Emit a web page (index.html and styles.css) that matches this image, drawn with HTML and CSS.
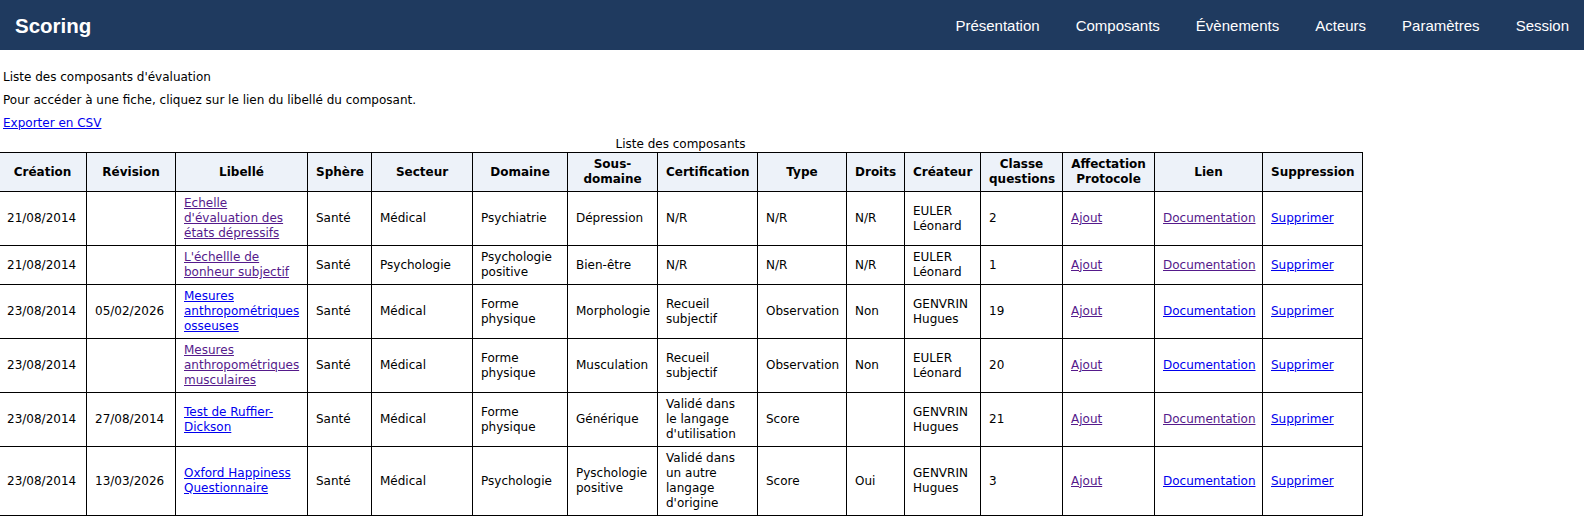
FILE: index.html
```html
<!DOCTYPE html>
<html lang="fr">
<head>
<meta charset="utf-8">
<title>Scoring - Composants</title>
<link rel="stylesheet" href="styles.css">
</head>
<body>
<header class="topbar">
  <span class="brand">Scoring</span>
  <nav class="menu">
    <a class="menu-link" href="#">Présentation</a>
    <a class="menu-link" href="#">Composants</a>
    <a class="menu-link" href="#">Évènements</a>
    <a class="menu-link" href="#">Acteurs</a>
    <a class="menu-link" href="#">Paramètres</a>
    <a class="menu-link" href="#">Session</a>
  </nav>
</header>
<main class="content">
  <p class="intro">Liste des composants d'évaluation</p>
  <p class="intro">Pour accéder à une fiche, cliquez sur le lien du libellé du composant.</p>
  <p class="intro intro-last"><a class="lnk" href="#">Exporter en CSV</a></p>
  <table class="grid">
    <caption class="grid-caption">Liste des composants</caption>
    <colgroup>
      <col class="c-creation">
      <col class="c-revision">
      <col class="c-libelle">
      <col class="c-sphere">
      <col class="c-secteur">
      <col class="c-domaine">
      <col class="c-sousdomaine">
      <col class="c-certif">
      <col class="c-type">
      <col class="c-droits">
      <col class="c-createur">
      <col class="c-classe">
      <col class="c-affect">
      <col class="c-lien">
      <col class="c-suppr">
    </colgroup>
    <thead>
      <tr>
        <th>Création</th>
        <th>Révision</th>
        <th>Libellé</th>
        <th>Sphère</th>
        <th>Secteur</th>
        <th>Domaine</th>
        <th>Sous-domaine</th>
        <th>Certification</th>
        <th>Type</th>
        <th>Droits</th>
        <th>Créateur</th>
        <th>Classe questions</th>
        <th>Affectation Protocole</th>
        <th>Lien</th>
        <th>Suppression</th>
      </tr>
    </thead>
    <tbody>
      <tr>
        <td>21/08/2014</td>
        <td></td>
        <td><a class="lnk seen" href="#">Echelle d'évaluation des états dépressifs</a></td>
        <td>Santé</td>
        <td>Médical</td>
        <td>Psychiatrie</td>
        <td>Dépression</td>
        <td>N/R</td>
        <td>N/R</td>
        <td>N/R</td>
        <td>EULER Léonard</td>
        <td>2</td>
        <td><a class="lnk seen" href="#">Ajout</a></td>
        <td><a class="lnk seen" href="#">Documentation</a></td>
        <td><a class="lnk" href="#">Supprimer</a></td>
      </tr>
      <tr>
        <td>21/08/2014</td>
        <td></td>
        <td><a class="lnk seen" href="#">L'échellle de bonheur subjectif</a></td>
        <td>Santé</td>
        <td>Psychologie</td>
        <td>Psychologie positive</td>
        <td>Bien-être</td>
        <td>N/R</td>
        <td>N/R</td>
        <td>N/R</td>
        <td>EULER Léonard</td>
        <td>1</td>
        <td><a class="lnk seen" href="#">Ajout</a></td>
        <td><a class="lnk seen" href="#">Documentation</a></td>
        <td><a class="lnk" href="#">Supprimer</a></td>
      </tr>
      <tr>
        <td>23/08/2014</td>
        <td>05/02/2026</td>
        <td><a class="lnk" href="#">Mesures anthropométriques osseuses</a></td>
        <td>Santé</td>
        <td>Médical</td>
        <td>Forme physique</td>
        <td>Morphologie</td>
        <td>Recueil subjectif</td>
        <td>Observation</td>
        <td>Non</td>
        <td>GENVRIN Hugues</td>
        <td>19</td>
        <td><a class="lnk seen" href="#">Ajout</a></td>
        <td><a class="lnk" href="#">Documentation</a></td>
        <td><a class="lnk" href="#">Supprimer</a></td>
      </tr>
      <tr>
        <td>23/08/2014</td>
        <td></td>
        <td><a class="lnk seen" href="#">Mesures anthropométriques musculaires</a></td>
        <td>Santé</td>
        <td>Médical</td>
        <td>Forme physique</td>
        <td>Musculation</td>
        <td>Recueil subjectif</td>
        <td>Observation</td>
        <td>Non</td>
        <td>EULER Léonard</td>
        <td>20</td>
        <td><a class="lnk seen" href="#">Ajout</a></td>
        <td><a class="lnk" href="#">Documentation</a></td>
        <td><a class="lnk" href="#">Supprimer</a></td>
      </tr>
      <tr>
        <td>23/08/2014</td>
        <td>27/08/2014</td>
        <td><a class="lnk" href="#">Test de Ruffier-Dickson</a></td>
        <td>Santé</td>
        <td>Médical</td>
        <td>Forme physique</td>
        <td>Générique</td>
        <td>Validé dans le langage d'utilisation</td>
        <td>Score</td>
        <td></td>
        <td>GENVRIN Hugues</td>
        <td>21</td>
        <td><a class="lnk seen" href="#">Ajout</a></td>
        <td><a class="lnk seen" href="#">Documentation</a></td>
        <td><a class="lnk" href="#">Supprimer</a></td>
      </tr>
      <tr>
        <td>23/08/2014</td>
        <td>13/03/2026</td>
        <td><a class="lnk" href="#">Oxford Happiness Questionnaire</a></td>
        <td>Santé</td>
        <td>Médical</td>
        <td>Psychologie</td>
        <td>Pyschologie positive</td>
        <td>Validé dans un autre langage d'origine</td>
        <td>Score</td>
        <td>Oui</td>
        <td>GENVRIN Hugues</td>
        <td>3</td>
        <td><a class="lnk seen" href="#">Ajout</a></td>
        <td><a class="lnk" href="#">Documentation</a></td>
        <td><a class="lnk" href="#">Supprimer</a></td>
      </tr>
    </tbody>
  </table>
</main>
</body>
</html>
```
FILE: styles.css
```css
body {
  margin: 0;
  background: #ffffff;
  color: #000000;
  font-family: "DejaVu Sans", Verdana, sans-serif;
  font-size: 12px;
  line-height: 15px;
}

.topbar {
  height: 50px;
  background: #1f3a5f;
  display: flex;
  align-items: center;
  justify-content: space-between;
  padding: 0 15px;
}

.brand {
  font-family: "Liberation Sans", Arial, sans-serif;
  font-size: 20.5px;
  font-weight: bold;
  color: #ffffff;
}

.menu {
  display: flex;
  gap: 36px;
}

.menu-link {
  font-family: "Liberation Sans", Arial, sans-serif;
  font-size: 15px;
  color: #ffffff;
  text-decoration: none;
}

.content {
  padding-top: 20px;
}

.intro {
  margin: 0 0 8px 3px;
}

.intro-last {
  margin-bottom: 5px;
}

.lnk {
  color: #0000ee;
  text-decoration: underline;
}

.lnk.seen {
  color: #551a8b;
}

.grid {
  border-collapse: collapse;
  table-layout: fixed;
  width: 1365px;
  margin-left: -2px;
}

.grid-caption {
  padding-top: 1px;
  line-height: 15px;
  text-align: center;
}

.grid th,
.grid td {
  border: 1px solid #000000;
  padding: 4px 8px;
  vertical-align: middle;
  text-align: left;
}

.grid th {
  background: #edf2f9;
  font-weight: bold;
  text-align: center;
}

.c-creation { width: 88px; }
.c-revision { width: 89px; }
.c-libelle { width: 132px; }
.c-sphere { width: 64px; }
.c-secteur { width: 101px; }
.c-domaine { width: 95px; }
.c-sousdomaine { width: 90px; }
.c-certif { width: 100px; }
.c-type { width: 89px; }
.c-droits { width: 58px; }
.c-createur { width: 76px; }
.c-classe { width: 82px; }
.c-affect { width: 92px; }
.c-lien { width: 108px; }
.c-suppr { width: 100px; }
```
